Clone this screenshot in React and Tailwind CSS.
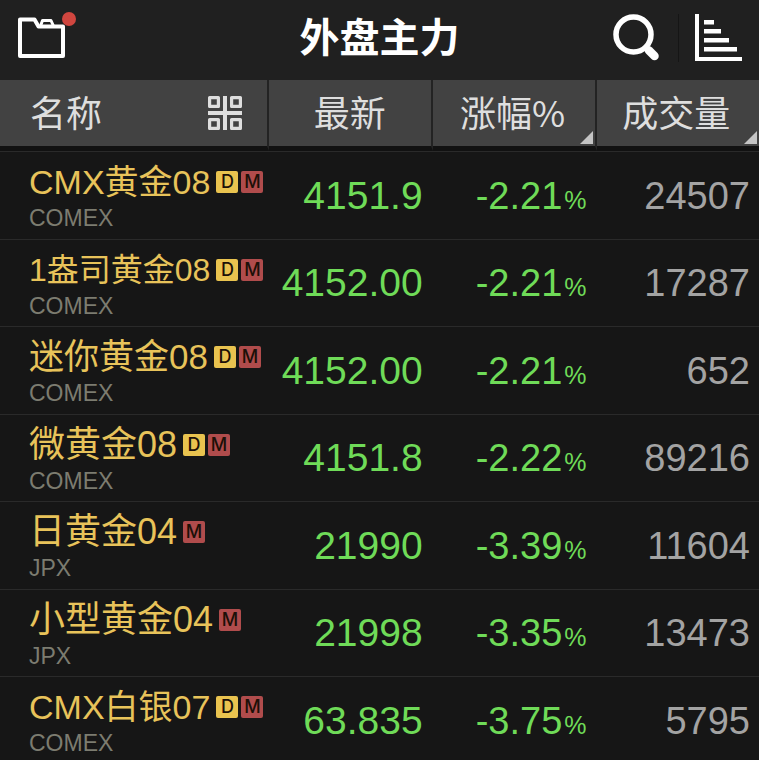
import clsx from 'clsx';

const quotes = [
  { name: 'CMX黄金08', exchange: 'COMEX', tags: ['D', 'M'], price: '4151.9', change: '-2.21', volume: '24507', size: 'text-[34px]' },
  { name: '1盎司黄金08', exchange: 'COMEX', tags: ['D', 'M'], price: '4152.00', change: '-2.21', volume: '17287', size: 'text-[32px]' },
  { name: '迷你黄金08', exchange: 'COMEX', tags: ['D', 'M'], price: '4152.00', change: '-2.21', volume: '652', size: 'text-[35px]' },
  { name: '微黄金08', exchange: 'COMEX', tags: ['D', 'M'], price: '4151.8', change: '-2.22', volume: '89216', size: 'text-[36px]' },
  { name: '日黄金04', exchange: 'JPX', tags: ['M'], price: '21990', change: '-3.39', volume: '11604', size: 'text-[36px]' },
  { name: '小型黄金04', exchange: 'JPX', tags: ['M'], price: '21998', change: '-3.35', volume: '13473', size: 'text-[36px]' },
  { name: 'CMX白银07', exchange: 'COMEX', tags: ['D', 'M'], price: '63.835', change: '-3.75', volume: '5795', size: 'text-[34px]' },
];

const FolderIcon = () => (
  <svg className="w-12 h-[42px]" viewBox="0 0 48 42" fill="none" stroke="#fff" strokeLinejoin="round">
    <path strokeWidth="4" d="M2 2.500H16.500L20.500 9.500H45V39H2Z" />
    <path strokeWidth="3" d="M22.500 9L24.500 3.500H33L35.500 9" />
  </svg>
);

const SearchIcon = () => (
  <svg className="w-12 h-12" viewBox="0 0 48 48" fill="none" stroke="#fff">
    <circle cx="21.500" cy="20.500" r="17.500" strokeWidth="5.500" />
    <path strokeWidth="5" d="M33 32L36 35" />
    <path strokeWidth="8.500" strokeLinecap="round" d="M37 36.500L42.500 42" />
  </svg>
);

const RankIcon = () => (
  <svg className="w-12 h-12" viewBox="0 0 48 48" fill="#fff">
    <path d="M0 0H4V43H47V47H0Z" />
    <path d="M9 6H19V10.500H9ZM9 15H26V19.500H9ZM9 24H34V28.500H9ZM9 33H42V37.500H9Z" />
  </svg>
);

const GridIcon = () => (
  <svg className="w-[34px] h-[34px]" viewBox="0 0 34 34" fill="none" stroke="#dedede" strokeWidth="3.200">
    <path d="M17 0V34M0 17H34" strokeWidth="4" />
    <path d="M1.600 1.600H10.400V10.400H1.600ZM23.600 1.600H32.400V10.400H23.600ZM1.600 23.600H10.400V32.400H1.600ZM23.600 23.600H32.400V32.400H23.600Z" strokeLinejoin="round" />
  </svg>
);

// Small triangle in the corner of sortable columns
const SortMark = () => (
  <svg className="absolute right-[2px] bottom-[2px] w-[13px] h-[13px]" viewBox="0 0 13 13" fill="#c4c4c4">
    <path d="M13 0V13H0Z" />
  </svg>
);

const Tag = ({ type }) => (
  <span
    className={clsx(
      'flex items-center justify-center w-[22px] h-[22px] rounded-[2px] text-[18px] leading-none font-[Inter,sans-serif] font-medium text-[#1c1008]',
      type === 'D' ? 'bg-[#e9c34f]' : 'bg-[#b04c4c]'
    )}
  >
    {type}
  </span>
);

const QuoteRow = ({ quote }) => (
  <tr className="odd:h-[88px] even:h-[87px] *:border-t *:border-[#2a2a2a]">
    <td className="pl-[29px] align-top pt-[10px] whitespace-nowrap">
      <div className="flex items-center gap-[6px] h-10">
        <span className={clsx('leading-10 text-[#e8c35a]', quote.size)}>{quote.name}</span>
        <span className="flex gap-[3px]">
          {quote.tags.map((tag) => (
            <Tag key={tag} type={tag} />
          ))}
        </span>
      </div>
      <div className="text-[23px] leading-8 text-[#7c7c70]">{quote.exchange}</div>
    </td>
    <td className="pr-[10px] text-right text-[39px] leading-10 text-[#6fdb58]">{quote.price}</td>
    <td className="pr-[10px] text-right text-[38px] leading-10 text-[#6fdb58] whitespace-nowrap">
      {quote.change}
      <span className="ml-[2px] text-[25px] leading-none">%</span>
    </td>
    <td className="pr-[9px] text-right text-[38px] leading-10 text-[#a3a3a3]">{quote.volume}</td>
  </tr>
);

export default function App() {
  return (
    <div className='h-screen flex flex-col overflow-hidden bg-[#161616] font-["Liberation_Sans","Noto_Sans_CJK_SC",sans-serif]'>
      <header className="shrink-0 grid grid-cols-[1fr_auto_1fr] items-center h-20 px-4 pb-1 bg-[#202020]">
        <button aria-label="自选分组" className="relative justify-self-start ml-[2px]">
          <FolderIcon />
          <span className="absolute -top-[5px] -right-[10px] w-[14px] h-[14px] rounded-full bg-[#d0463f]" />
        </button>
        <h1 className="text-[40px] leading-none font-bold text-white">外盘主力</h1>
        <div className="flex items-center justify-self-end">
          <button aria-label="搜索">
            <SearchIcon />
          </button>
          <span className="w-px h-12 ml-[18px] mr-4 bg-[#151515]" />
          <button aria-label="排行">
            <RankIcon />
          </button>
        </div>
      </header>

      <div className="flex-1 min-h-0 overflow-hidden">
        <table className="w-full table-fixed border-separate border-spacing-0">
          <colgroup>
            <col className="w-[35.4%]" />
            <col className="w-[21.6%]" />
            <col className="w-[21.6%]" />
            <col className="w-[21.4%]" />
          </colgroup>
          <thead className='text-[36px] leading-none text-[#dedede] font-["Noto_Sans_CJK_SC",sans-serif]'>
            <tr className="h-[71px] bg-[#424242] *:border-b-[5px] *:border-b-[#111] *:border-r-[#232323] *:pb-1 *:font-normal">
              <th className="pl-[30px] pr-[25px] border-r-2">
                <div className="flex items-center justify-between">
                  名称
                  <button aria-label="切换视图" className="pt-1">
                    <GridIcon />
                  </button>
                </div>
              </th>
              <th className="border-r-2">最新</th>
              <th className="relative border-r-2 pr-[2px]">
                <button>涨幅%</button>
                <SortMark />
              </th>
              <th className="relative pr-[3px]">
                <button>成交量</button>
                <SortMark />
              </th>
            </tr>
          </thead>
          <tbody>
            {quotes.map((quote) => (
              <QuoteRow key={quote.name} quote={quote} />
            ))}
          </tbody>
        </table>
      </div>
    </div>
  );
}
